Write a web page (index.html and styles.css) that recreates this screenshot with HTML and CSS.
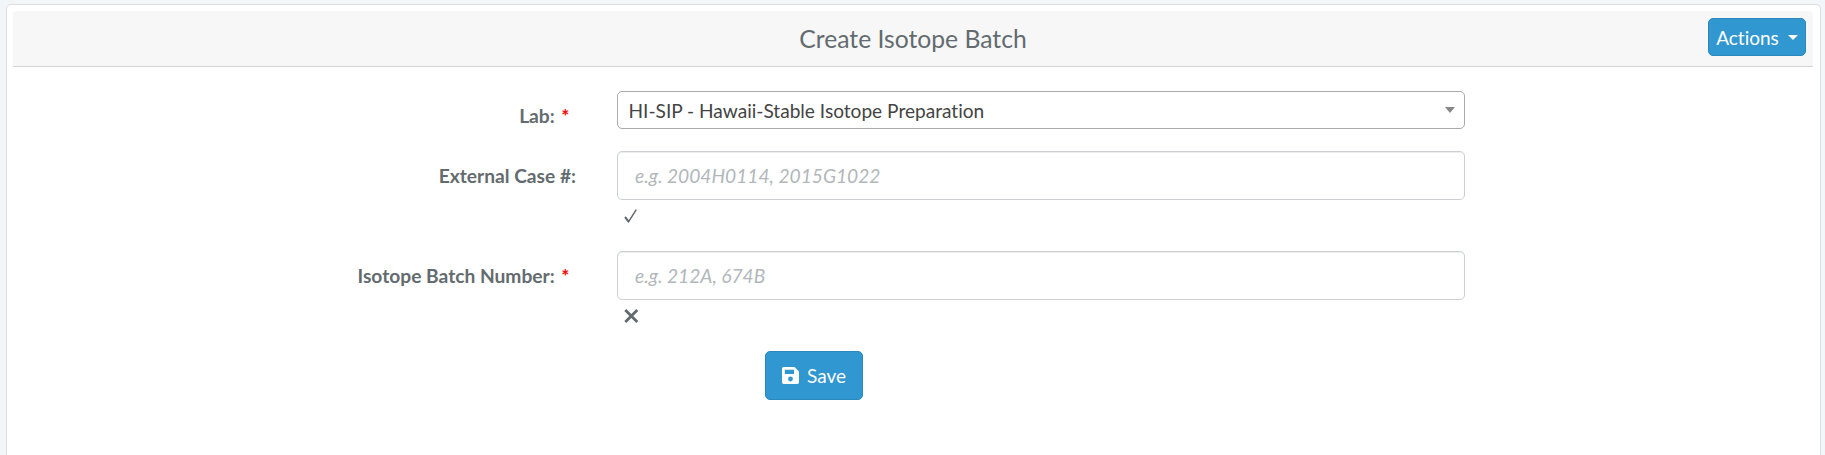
FILE: index.html
```html
<!DOCTYPE html>
<html lang="en">
<head>
<meta charset="utf-8">
<title>Create Isotope Batch</title>
<link rel="stylesheet" href="styles.css">
</head>
<body>
<main class="panel">
  <header class="panel-heading">
    <h1 class="title">Create Isotope Batch</h1>
    <button class="btn btn-actions" type="button">Actions <span class="caret"></span></button>
  </header>
  <form class="form">
    <div class="row row-lab">
      <label class="label label-required">Lab: <span class="required">*</span></label>
      <div class="select"><span>HI-SIP - Hawaii-Stable Isotope Preparation</span><span class="select-arrow"></span></div>
    </div>
    <div class="row">
      <label class="label" for="case">External Case #:</label>
      <div class="field">
        <input class="input" id="case" type="text" placeholder="e.g. 2004H0114, 2015G1022">
        <svg class="mark" viewBox="0 0 16 16"><path d="M2.2 8.9 5.6 13.6 13.3 1.6" fill="none" stroke="#636b6f" stroke-width="1.5"/><path d="M2.1 9.2 5.5 13.7" fill="none" stroke="#636b6f" stroke-width="2"/></svg>
      </div>
    </div>
    <div class="row">
      <label class="label label-required" for="batch">Isotope Batch Number: <span class="required">*</span></label>
      <div class="field">
        <input class="input" id="batch" type="text" placeholder="e.g. 212A, 674B">
        <svg class="mark" viewBox="0 0 16 16"><path d="M2.3 2 14.3 14M14.3 2 2.3 14" fill="none" stroke="#636b6f" stroke-width="2.8"/></svg>
      </div>
    </div>
    <button class="btn btn-save" type="button"><svg class="disk" viewBox="0 0 17 17"><path fill="#fff" fill-rule="evenodd" d="M1.7 0H12.5L17 4.5V15.3Q17 17 15.3 17H1.7Q0 17 0 15.3V1.7Q0 0 1.7 0ZM2.8 2.7V7H12V2.7ZM8.5 9.6A2.4 2.4 0 1 0 8.5 14.4A2.4 2.4 0 1 0 8.5 9.6Z"/></svg>Save</button>
  </form>
</main>
</body>
</html>
```
FILE: styles.css
```css
* { box-sizing: border-box; }
body {
  margin: 0;
  height: 455px;
  overflow: hidden;
  padding: 4px 4px 0 6px;
  background: #f2f6f9;
  color: #636b6f;
  font: 19px/27px Lato, sans-serif;
  font-variant-ligatures: none;
}
.panel {
  height: 451px;
  padding: 6px 7px 0 6px;
  background: #fff;
  border: 1px solid #dcdfe1;
  border-bottom: 0;
  border-radius: 5px 5px 0 0;
}
.panel-heading {
  display: grid;
  grid-template-columns: 1fr auto 1fr;
  height: 56px;
  padding: 7px 7px 0;
  background: #f7f7f7;
  border-bottom: 1px solid #d3d3d3;
  border-radius: 4px 4px 0 0;
}
.title {
  grid-column: 2;
  margin: 0;
  font-size: 24.7px;
  font-weight: 400;
  line-height: 42px;
}
.btn {
  display: flex;
  align-items: center;
  justify-content: center;
  width: 98px;
  padding: 0;
  color: #fff;
  background: #3097d1;
  border: 1px solid #2a88bd;
  border-radius: 5px;
  font: 19px/27px Lato, sans-serif;
  font-variant-ligatures: none;
}
.btn-actions { justify-self: end; height: 38px; }
.caret {
  margin-left: 9px;
  border: 5px solid transparent;
  border-top-color: #fff;
  border-bottom: 0;
}
.form { padding-top: 24px; }
.row {
  display: grid;
  grid-template-columns: 563px 848px;
  column-gap: 41px;
  height: 100px;
}
.row-lab { height: 60px; }
.label {
  padding-top: 11px;
  text-align: right;
  font-size: 19.2px;
  font-weight: 700;
}
.label-required { padding-right: 6.5px; }
.required { margin-left: 2px; color: #f00; }
.select {
  display: flex;
  align-items: center;
  justify-content: space-between;
  height: 38px;
  padding: 0 9px 0 10.5px;
  color: #444;
  font-size: 19.1px;
  border: 1px solid #aaa;
  border-radius: 5px;
}
.select-arrow {
  border: 5px solid transparent;
  border-top: 6px solid #888;
  border-bottom: 0;
}
.input {
  display: block;
  width: 100%;
  height: 49px;
  padding: 0 17px;
  font: 19.2px/27px Lato, sans-serif;
  background: #fff;
  border: 1px solid #ccd0d2;
  border-radius: 5px;
  box-shadow: inset 0 1px 1px rgba(0, 0, 0, .075);
}
.input::placeholder { color: #b1b7ba; font-style: italic; opacity: 1; }
.mark { display: block; width: 16px; height: 16px; margin: 8px 0 0 6px; }
.btn-save { height: 49px; margin-left: 752px; }
.disk { width: 17px; height: 17px; margin-right: 8px; }
```
